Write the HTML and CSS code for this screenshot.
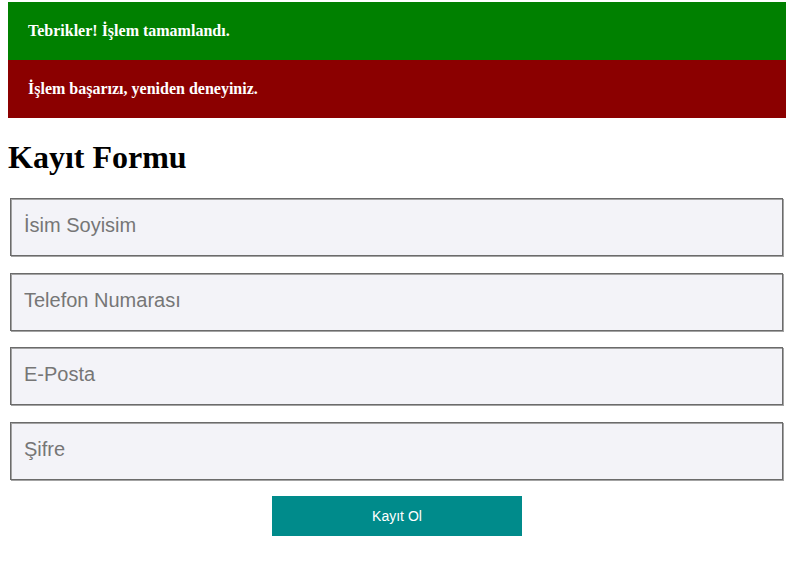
FILE: index.html
```html
<!DOCTYPE html>
<html lang="tr">
<head>
<meta charset="utf-8">
<title>Kayıt Formu</title>
<link rel="stylesheet" href="styles.css">
</head>
<body>
<div class="page">
  <div class="alert alert-success">Tebrikler! İşlem tamamlandı.</div>
  <div class="alert alert-error">İşlem başarızı, yeniden deneyiniz.</div>
  <h1 class="title">Kayıt Formu</h1>
  <form class="form">
    <input class="field" type="text" placeholder="İsim Soyisim">
    <input class="field" type="text" placeholder="Telefon Numarası">
    <input class="field" type="text" placeholder="E-Posta">
    <input class="field" type="password" placeholder="Şifre">
    <button class="submit" type="button">Kayıt Ol</button>
  </form>
</div>
</body>
</html>
```

FILE: styles.css
```css
html, body {
  margin: 0;
  padding: 0;
  background: #ffffff;
}
body {
  font-family: "Liberation Serif", serif;
}
.page {
  padding: 2px 6px 0 8px;
}
.alert {
  padding: 20px;
  font-size: 16px;
  line-height: 18px;
  font-weight: bold;
  color: #ffffff;
}
.alert-success {
  background: #008000;
}
.alert-error {
  background: #8b0000;
}
.title {
  font-size: 32px;
  font-weight: bold;
  margin: 21px 0 22px 0;
  line-height: 37px;
}
.form {
  display: flex;
  flex-direction: column;
  align-items: center;
}
.field {
  box-sizing: border-box;
  align-self: stretch;
  margin: 0 3px 16.5px 2px;
  height: 58px;
  border: 1px solid #6b6b6b;
  box-shadow: inset 1px 1px 0 #a3a3a3, 1px 1px 0 #a3a3a3;
  background: #f3f3f8;
  padding: 0 0 3px 13px;
  font-family: "Liberation Sans", Arial, sans-serif;
  font-size: 20px;
  color: #333;
  outline: none;
}
.field::placeholder {
  color: #767676;
}
.submit {
  width: 250px;
  height: 40px;
  border: none;
  background: #008b8b;
  color: #ffffff;
  font-family: "Liberation Sans", Arial, sans-serif;
  font-size: 14px;
}
```
